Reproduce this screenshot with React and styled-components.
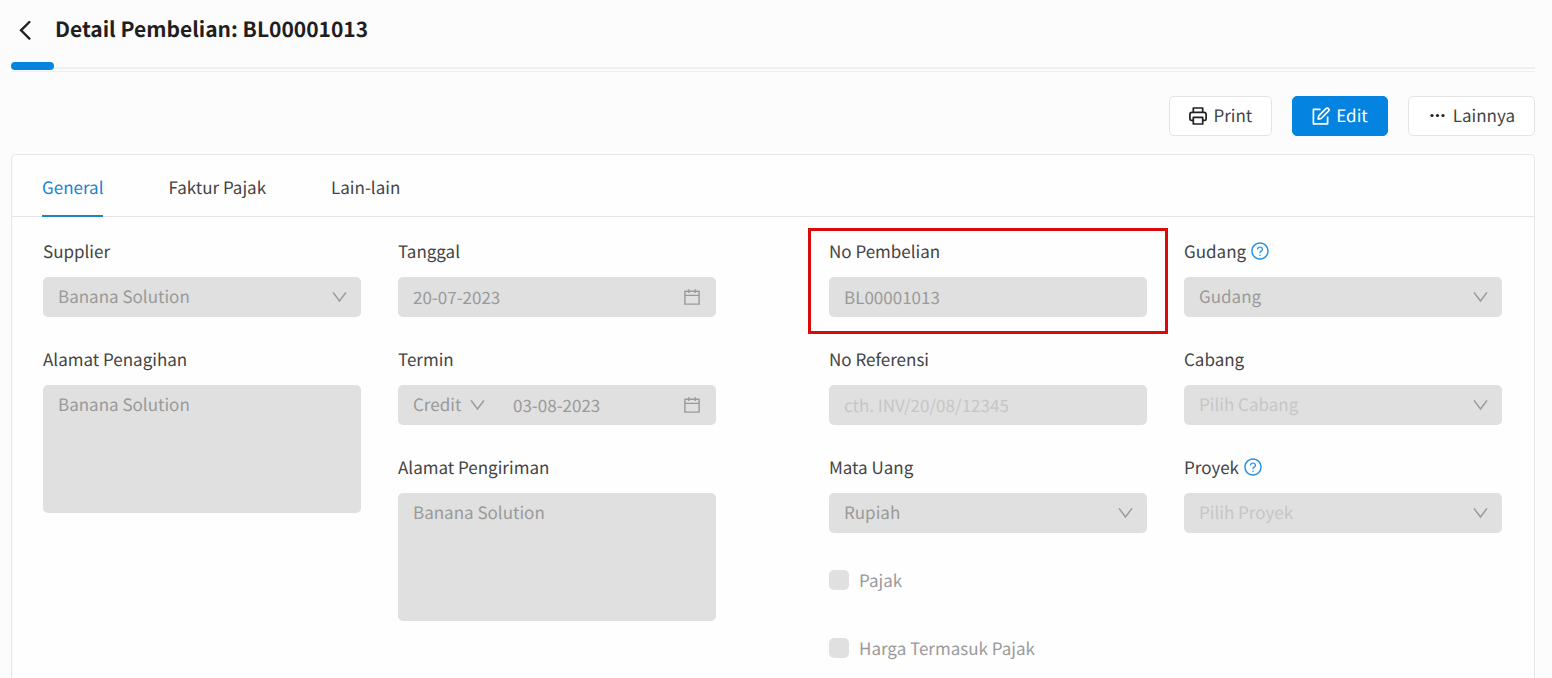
import React from "react";
import styled, { createGlobalStyle, css } from "styled-components";
import { AiOutlineCalendar, AiOutlineQuestionCircle } from "react-icons/ai";

const GlobalStyle = createGlobalStyle`
  *, *::before, *::after { box-sizing: border-box; }
  body {
    margin: 0;
    background: #fcfcfc;
    color: #444;
    font: 17px/24px "Noto Sans CJK SC", "Noto Sans", sans-serif;
    text-rendering: geometricPrecision;
    overflow-x: hidden;
  }
  button, input, select, textarea { font: inherit; text-rendering: inherit; }
`;

const Page = styled.div`
  padding: 0 17px 0 11px;
`;

const Header = styled.header`
  display: flex;
  align-items: center;
  height: 60px;
  gap: 20px;
  padding-left: 4px;
`;

const BackButton = styled.button`
  display: flex;
  align-items: center;
  justify-content: center;
  width: 20px;
  height: 32px;
  padding: 0;
  border: 0;
  background: none;
  color: #222;
`;

const Title = styled.h1`
  margin: 0;
  padding-bottom: 2px;
  font-size: 21px;
  line-height: 32px;
  font-weight: 700;
  color: #1f1f1f;
`;

const TabTrack = styled.div`
  height: 12px;
  padding-top: 2px;
  border-bottom: 1px solid #efefef;
`;

const TrackLine = styled.div`
  display: flex;
  align-items: center;
  height: 8px;
  background: linear-gradient(#f0f0f0, #f0f0f0) 0 5px / 100% 2px no-repeat;
`;

const TrackMark = styled.span`
  width: 43px;
  height: 8px;
  border-radius: 4px;
  background: #0484e0;
`;

const Toolbar = styled.div`
  display: flex;
  justify-content: flex-end;
  gap: 20px;
  padding: 24px 0 18px;
`;

const ToolButton = styled.button`
  display: inline-flex;
  align-items: center;
  gap: 6px;
  height: 40px;
  padding: 0 19px;
  border: 1px solid ${(p) => (p.$primary ? "#0484e0" : "#e4e4e4")};
  border-radius: 5px;
  background: ${(p) => (p.$primary ? "#0484e0" : "#fff")};
  color: ${(p) => (p.$primary ? "#fff" : "#444")};
  svg {
    color: ${(p) => (p.$primary ? "#fff" : "#222")};
  }
  span {
    padding-bottom: 2px;
  }
`;

const Card = styled.section`
  border: 1px solid #e6e6e6;
  border-bottom: 0;
  border-radius: 5px 5px 0 0;
  background: #fefefe;
`;

const Tabs = styled.nav`
  display: flex;
  gap: 65px;
  height: 62px;
  padding: 0 30px;
  border-bottom: 1px solid #e4e4e4;
`;

const Tab = styled.a`
  display: flex;
  align-items: center;
  height: 62px;
  padding-top: 3px;
  text-decoration: none;
  color: ${(p) => (p.$active ? "#1a84d4" : "#444")};
  border-bottom: 2px solid ${(p) => (p.$active ? "#1f84c0" : "transparent")};
`;

const Form = styled.form`
  display: grid;
  grid-template-columns: repeat(2, minmax(0, 1fr));
  column-gap: 113px;
  padding: 22px 32px 20px 31px;
`;

const Half = styled.div`
  display: grid;
  grid-template-columns: repeat(2, minmax(0, 1fr));
  column-gap: 37px;
  align-items: start;
`;

const Column = styled.div`
  display: flex;
  flex-direction: column;
  gap: 30px;
`;

const FieldBox = styled.div`
  position: relative;
  display: flex;
  flex-direction: column;
  gap: 14px;
`;

const LabelRow = styled.div`
  display: flex;
  align-items: center;
  gap: 4px;
  height: 24px;
`;

const HelpButton = styled.button`
  display: flex;
  padding: 0;
  border: 0;
  background: none;
  color: #2a94e0;
`;

const Highlight = styled.div`
  position: absolute;
  inset: -11px -21px -17px;
  border: 3px solid #d80a0a;
  pointer-events: none;
`;

const Shell = styled.div`
  display: flex;
  align-items: center;
  height: 40px;
  padding: 0 14px 0 15px;
  border-radius: 5px;
  background: #e0e0e0;
  color: #9a9a9a;
`;

const control = css`
  min-width: 0;
  padding: 0 0 2px;
  border: 0;
  outline: 0;
  background: none;
  opacity: 1;
  height: 26px;
  color: ${(p) => (p.$empty ? "#c6c6c6" : "#9a9a9a")};
  &::placeholder { color: #c6c6c6; opacity: 1; }
`;

const Input = styled.input`
  ${control}
  flex: 1;
`;

const Select = styled.select`
  ${control}
  appearance: none;
  flex: ${(p) => (p.$compact ? "none" : "1")};
`;

const Split = styled.div`
  display: flex;
  align-items: center;
  gap: 8px;
  margin-right: 28px;
`;

const TextArea = styled.textarea`
  display: block;
  width: 100%;
  height: 128px;
  padding: 7px 15px;
  border: 0;
  border-radius: 5px;
  background: #e0e0e0;
  color: #9a9a9a;
  resize: none;
`;

const CheckList = styled.div`
  display: flex;
  flex-direction: column;
  gap: 44px;
  padding-top: 5px;
`;

const CheckLabel = styled.label`
  display: flex;
  align-items: center;
  gap: 10px;
  color: #9a9a9a;
`;

const CheckBox = styled.input`
  appearance: none;
  width: 20px;
  height: 20px;
  margin: 0;
  border-radius: 5px;
  background: #e0e0e0;
`;

const Chevron = () => (
  <svg width="15" height="12" viewBox="0 0 15 12" fill="none" stroke="currentColor" strokeWidth="1.5" aria-hidden="true">
    <path d="M1 1.4L7.5 10L14 1.4" />
  </svg>
);

const BackIcon = () => (
  <svg width="12" height="20" viewBox="0 0 12 20" fill="none" stroke="currentColor" strokeWidth="2.4" strokeLinecap="round" aria-hidden="true">
    <path d="M10.4 2L2 10.3L10.4 18.6" />
  </svg>
);

const PrintIcon = () => (
  <svg width="18" height="18" viewBox="0 0 18 18" fill="none" stroke="currentColor" strokeWidth="1.7" strokeLinejoin="round" aria-hidden="true">
    <path d="M4.3 5.3V1H13.7V5.3" />
    <path d="M4.3 13.3H2.3A1.4 1.4 0 0 1 0.9 11.9V7.4A2.1 2.1 0 0 1 3 5.3H15A2.1 2.1 0 0 1 17.1 7.4V11.9A1.4 1.4 0 0 1 15.7 13.3H13.7" />
    <path d="M4.3 10.4H13.7V17H4.3Z" />
  </svg>
);

const EditIcon = () => (
  <svg width="18" height="18" viewBox="0 0 18 18" fill="none" stroke="currentColor" strokeWidth="1.7" strokeLinejoin="round" aria-hidden="true">
    <path d="M8.6 2.4H1.4V16.8H15.6V9.6" />
    <path d="M6.2 12.1L6.7 8.9L13.9 1.7A1.7 1.7 0 0 1 16.4 4.2L9.2 11.5Z" />
  </svg>
);

const DotsIcon = () => (
  <svg width="19" height="18" viewBox="0 0 19 18" fill="currentColor" aria-hidden="true">
    <circle cx="4" cy="8.5" r="1.6" />
    <circle cx="9.5" cy="8.5" r="1.6" />
    <circle cx="15" cy="8.5" r="1.6" />
  </svg>
);

function Field({ id, label, help, highlight, children }) {
  return (
    <FieldBox>
      <LabelRow>
        <label htmlFor={id}>{label}</label>
        {help && (
          <HelpButton type="button" aria-label={`Bantuan ${label}`}>
            <AiOutlineQuestionCircle size={20} />
          </HelpButton>
        )}
      </LabelRow>
      {children}
      {highlight && <Highlight />}
    </FieldBox>
  );
}

function SelectField({ id, label, value, help, empty }) {
  return (
    <Field id={id} label={label} help={help}>
      <Shell>
        <Select id={id} disabled $empty={empty}>
          <option>{value}</option>
        </Select>
        <Chevron />
      </Shell>
    </Field>
  );
}

export default function App() {
  return (
    <>
      <GlobalStyle />
      <Page>
        <Header>
          <BackButton type="button" aria-label="Kembali">
            <BackIcon />
          </BackButton>
          <Title>Detail Pembelian: BL00001013</Title>
        </Header>
        <TabTrack>
          <TrackLine>
            <TrackMark />
          </TrackLine>
        </TabTrack>
        <Toolbar>
          <ToolButton type="button">
            <PrintIcon />
            <span>Print</span>
          </ToolButton>
          <ToolButton type="button" $primary>
            <EditIcon />
            <span>Edit</span>
          </ToolButton>
          <ToolButton type="button">
            <DotsIcon />
            <span>Lainnya</span>
          </ToolButton>
        </Toolbar>
        <Card>
          <Tabs>
            <Tab href="#general" $active>General</Tab>
            <Tab href="#faktur-pajak">Faktur Pajak</Tab>
            <Tab href="#lain-lain">Lain-lain</Tab>
          </Tabs>
          <Form>
            <Half>
              <Column>
                <SelectField id="supplier" label="Supplier" value="Banana Solution" />
                <Field id="penagihan" label="Alamat Penagihan">
                  <TextArea id="penagihan" disabled defaultValue="Banana Solution" />
                </Field>
              </Column>
              <Column>
                <Field id="tanggal" label="Tanggal">
                  <Shell>
                    <Input id="tanggal" disabled defaultValue="20-07-2023" />
                    <AiOutlineCalendar size={20} />
                  </Shell>
                </Field>
                <Field id="termin" label="Termin">
                  <Shell>
                    <Split>
                      <Select id="termin" disabled $compact>
                        <option>Credit</option>
                      </Select>
                      <Chevron />
                    </Split>
                    <Input aria-label="Tanggal jatuh tempo" disabled defaultValue="03-08-2023" />
                    <AiOutlineCalendar size={20} />
                  </Shell>
                </Field>
                <Field id="pengiriman" label="Alamat Pengiriman">
                  <TextArea id="pengiriman" disabled defaultValue="Banana Solution" />
                </Field>
              </Column>
            </Half>
            <Half>
              <Column>
                <Field id="nomor" label="No Pembelian" highlight>
                  <Shell>
                    <Input id="nomor" disabled defaultValue="BL00001013" />
                  </Shell>
                </Field>
                <Field id="referensi" label="No Referensi">
                  <Shell>
                    <Input id="referensi" disabled placeholder="cth. INV/20/08/12345" />
                  </Shell>
                </Field>
                <SelectField id="mata-uang" label="Mata Uang" value="Rupiah" />
                <CheckList>
                  <CheckLabel>
                    <CheckBox type="checkbox" disabled />
                    Pajak
                  </CheckLabel>
                  <CheckLabel>
                    <CheckBox type="checkbox" disabled />
                    Harga Termasuk Pajak
                  </CheckLabel>
                </CheckList>
              </Column>
              <Column>
                <SelectField id="gudang" label="Gudang" value="Gudang" help />
                <SelectField id="cabang" label="Cabang" value="Pilih Cabang" empty />
                <SelectField id="proyek" label="Proyek" value="Pilih Proyek" help empty />
              </Column>
            </Half>
          </Form>
        </Card>
      </Page>
    </>
  );
}
